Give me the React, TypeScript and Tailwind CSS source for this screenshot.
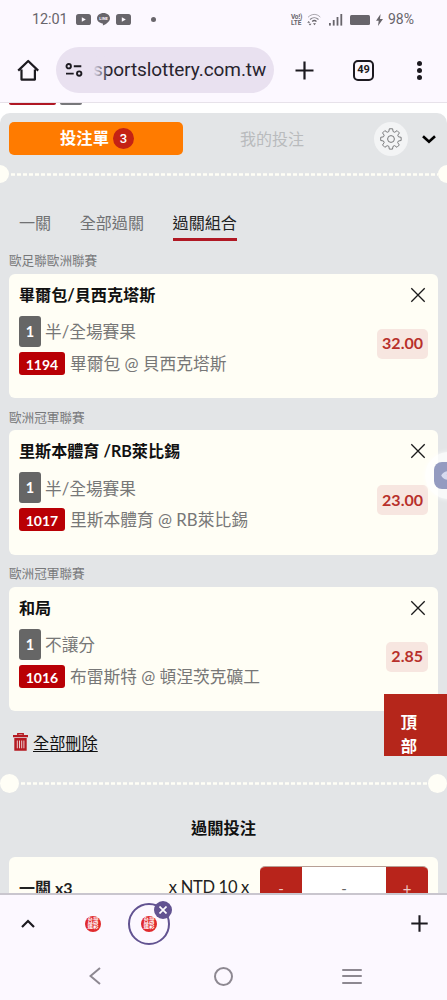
type Bet = {
  league: string
  title: string
  order: string
  play: string
  code: string
  match: string
  odds: string
}

const bets: Bet[] = [
  { league: '歐足聯歐洲聯賽', title: '畢爾包/貝西克塔斯', order: '1', play: '半/全場賽果', code: '1194', match: '畢爾包 @ 貝西克塔斯', odds: '32.00' },
  { league: '歐洲冠軍聯賽', title: '里斯本體育 /RB萊比錫', order: '1', play: '半/全場賽果', code: '1017', match: '里斯本體育 @ RB萊比錫', odds: '23.00' },
  { league: '歐洲冠軍聯賽', title: '和局', order: '1', play: '不讓分', code: '1016', match: '布雷斯特 @ 頓涅茨克礦工', odds: '2.85' },
]

const tabs = ['一關', '全部過關', '過關組合']

function VideoIcon() {
  return (
    <svg width="15" height="11" viewBox="0 0 15 11">
      <rect width="15" height="11" rx="2.6" fill="#68656b" />
      <path d="M5.8 3.2v4.6l4-2.3z" fill="#fcf8ff" />
    </svg>
  )
}

function StatusBar() {
  return (
    <div className="flex h-[38px] shrink-0 items-center pt-px pl-[32px] pr-[33px] text-[#68656b]">
      <span className="w-[44px] font-[Roboto,sans-serif] text-[14.5px] tracking-[-0.1px] whitespace-nowrap">12:01</span>
      <div className="flex items-center gap-[6px]">
        <VideoIcon />
        <svg width="13" height="13" viewBox="0 0 13 13">
          <path d="M6.5 0C2.9 0 0 2.3 0 5.2c0 2.7 2.3 4.7 5.6 5.2.5.1.3 1 .3 2.1C8.5 11.5 13 8.7 13 5.2 13 2.3 10.1 0 6.5 0z" fill="#68656b" />
          <text x="6.5" y="6.8" textAnchor="middle" fontSize="4" fontWeight="700" fill="#fcf8ff" fontFamily="Roboto, sans-serif">LINE</text>
        </svg>
        <VideoIcon />
      </div>
      <span className="ml-[20px] size-[5px] rounded-full bg-[#68656b]" />
      <div className="ml-auto flex items-center">
        <div className="mr-[4px] flex w-[12px] flex-col font-[Roboto,sans-serif] text-[6.5px] leading-[6px] font-bold">
          <span className="tracking-[-0.3px]">Vo⁞)</span>
          <span>LTE</span>
        </div>
        <svg width="14" height="13" viewBox="0 0 14 13" fill="none" stroke="#68656b">
          <path d="M1 4.3c3.7-3.8 8.8-3.8 12.3-.2" strokeWidth="1" opacity=".55" />
          <path d="M3 6.5c2.5-2.4 6-2.4 8.5 0" strokeWidth="1.1" opacity=".8" />
          <path d="M5.2 8.5c1.3-1.2 2.9-1.2 4.3 0" strokeWidth="1.3" />
          <path d="M6 10.3h3l-1.5 1.9z" fill="#68656b" stroke="none" />
          <path d="M.2 9.8 1.7 8l1.5 1.8zM1.5 10.7h3L3 12.5z" fill="#68656b" stroke="none" />
        </svg>
        <svg className="ml-[8px]" width="14" height="13" viewBox="0 0 14 13" fill="#68656b">
          <rect x="0" y="10" width="1.8" height="2.6" />
          <rect x="3.8" y="7" width="1.8" height="5.6" />
          <rect x="7.6" y="4" width="1.8" height="8.6" />
          <rect x="11.4" y="1" width="1.8" height="11.6" />
        </svg>
        <span className="ml-[7px] h-[10px] w-[20px] rounded-[1.5px] bg-[#68656b]" />
        <svg className="ml-[6px]" width="7" height="12" viewBox="0 0 7 12">
          <path d="M4.6 0 0 6.7h2.7L2 12l5-7H4z" fill="#68656b" />
        </svg>
        <span className="ml-[5px] font-[Roboto,sans-serif] text-[14px]">98%</span>
      </div>
    </div>
  )
}

function AddressBar() {
  return (
    <div className="flex h-[64px] shrink-0 items-center px-[17px]">
      <svg width="22" height="22" viewBox="0 0 22 22" fill="none" stroke="#1c1a20" strokeWidth="2.2" strokeLinejoin="round">
        <path d="M1.2 11.6 11.2 2l10 9.6M4.5 10.5v10.1h13.4V10.5" />
      </svg>
      <div className="ml-[17px] flex h-[46px] w-[218px] items-center rounded-full bg-[#e9e1f0] pl-[9px]">
        <svg width="18" height="14" viewBox="0 0 18 14" fill="none" stroke="#1c1a20" strokeWidth="1.9">
          <circle cx="3.7" cy="3.2" r="2.2" />
          <path d="M8.8 3.2h7.5M1 10.6h7.7" />
          <circle cx="14.2" cy="10.6" r="2.2" />
        </svg>
        <div className="relative ml-[10px] w-[176px] overflow-hidden font-[Roboto,sans-serif] text-[19px] leading-[28px] tracking-[-0.08px] whitespace-nowrap text-[#28242e]">
          sportslottery.com.tw
          <span className="absolute inset-y-0 left-0 w-[13px] bg-linear-to-r from-[#e9e1f0] to-[#e9e1f0]/20" />
        </div>
      </div>
      <svg className="ml-[21px]" width="19" height="19" viewBox="0 0 19 19" stroke="#1c1a20" strokeWidth="2.2">
        <path d="M9.5 .5v18M.5 9.5h18" />
      </svg>
      <span className="ml-[39px] flex size-[21px] items-center justify-center rounded-[5px] border-2 border-[#1c1a20] font-[Roboto,sans-serif] text-[11px] font-bold text-[#1c1a20]">
        49
      </span>
      <div className="ml-[43px] flex flex-col gap-[2px]">
        <span className="size-[5px] rounded-full bg-[#1c1a20]" />
        <span className="size-[5px] rounded-full bg-[#1c1a20]" />
        <span className="size-[5px] rounded-full bg-[#1c1a20]" />
      </div>
    </div>
  )
}

function Dashes() {
  return (
    <svg className="min-w-0 flex-1" height="3">
      <line x1="2" y1="1.5" x2="100%" y2="1.5" stroke="#fffef6" strokeWidth="2.3" strokeDasharray="4 2" />
    </svg>
  )
}

function BetCard({ bet }: { bet: Bet }) {
  return (
    <div>
      <p className="h-[18px] text-[12.6px] leading-[19px] text-[#77787a]">{bet.league}</p>
      <div className="mt-[4.5px] flex h-[124.5px] justify-between rounded-[6px] bg-[#fffef5] pt-[10px] pr-[10px] pl-[10px]">
        <div>
          <h3 className="h-[24px] text-[16.1px] leading-[22px] font-bold text-[#111] whitespace-pre">{bet.title}</h3>
          <div className="mt-[8px] flex h-[31px] items-center gap-[4px]">
            <span className="flex h-[31px] w-[22px] items-center justify-center rounded-[3px] bg-[#666] pt-px text-[14.5px] font-bold text-white">{bet.order}</span>
            <span className="pt-[2px] text-[16.7px] leading-[24px] text-[#777]">{bet.play}</span>
          </div>
          <div className="mt-[5px] flex h-[23px] items-center gap-[5px]">
            <span className="flex h-[23px] w-[46px] items-center justify-center rounded-[3px] bg-[#b90005] pt-[2px] text-[14px] font-bold text-white">{bet.code}</span>
            <span className="text-[16.75px] leading-[23px] text-[#777]">{bet.match}</span>
          </div>
        </div>
        <div className="flex flex-col items-end">
          <svg className="mt-[3px] mr-[2px]" width="16" height="16" viewBox="0 0 16 16" stroke="#1a1a1a" strokeWidth="1.3">
            <path d="M1.3 1.3l13.4 13.4M14.7 1.3 1.3 14.7" />
          </svg>
          <span className="mt-[26px] flex h-[30px] items-center rounded-[5px] bg-[#f7e6e0] px-[5px] pb-px text-[16px] font-bold text-[#b8302b]">{bet.odds}</span>
        </div>
      </div>
    </div>
  )
}

// 分頁縮圖用的網站圖示
function SiteIcon() {
  return (
    <span className="block size-[16px] shrink-0 rounded-full bg-[#e02a2d] px-[2.5px] pt-[2.5px] font-['Noto_Sans_CJK_TC',sans-serif] text-[5.5px] leading-[5.5px] font-bold break-all text-white">
      台灣運彩
    </span>
  )
}

function BetSlip() {
  return (
    <div className="relative h-[791px] shrink-0 overflow-hidden border-t border-[#e7e2ea] bg-white font-[Lato,'Noto_Sans_CJK_TC',sans-serif]">
      <div className="flex h-[10px] gap-[4px] pl-[9px]">
        <span className="h-[2px] w-[47px] rounded-b-sm bg-[#b01824]" />
        <span className="h-[2px] w-[22px] rounded-b-sm bg-[#77777a]" />
      </div>
      <div className="h-[790px] rounded-t-[10px] bg-[#e3e5e7] pt-[9px]">
        <div className="flex h-[33px] items-center pl-[9px]">
          <button className="flex h-[33px] w-[174px] items-center justify-center gap-[4px] rounded-[5px] bg-[#ff7b00] pl-[2px] text-[16.3px] font-bold text-white">
            投注單
            <span className="flex size-[21px] items-center justify-center rounded-full bg-[#c42214] font-[Roboto,sans-serif] text-[13px] font-medium">3</span>
          </button>
          <span className="ml-[57px] text-[16px] text-[#b9bbbd]">我的投注</span>
          <span className="ml-auto flex size-[34px] items-center justify-center rounded-full bg-[#f3f4f5]">
            <svg width="22" height="22" viewBox="0 0 22 22" fill="none" stroke="#77787a" strokeWidth="1" strokeLinejoin="round">
              <path d="M9.3 1h3.4l.5 2.9 1.7.7 2.4-1.7 2.4 2.4L18 7.6l.7 1.7 2.8.5v3.3l-2.9.5-.7 1.7 1.7 2.4-2.4 2.4-2.4-1.7-1.7.7-.5 2.9H9.3l-.5-2.9-1.7-.7-2.4 1.7-2.4-2.4L4 15.3l-.7-1.7-2.9-.5V9.8l2.9-.5L4 7.6 2.3 5.3l2.4-2.4 2.4 1.7 1.7-.7z" transform="translate(.3 -.2) scale(.97)" />
              <circle cx="11" cy="11" r="3.4" />
            </svg>
          </span>
          <svg className="mr-[11px] ml-[14px] mt-[2px]" width="14" height="9" viewBox="0 0 14 9" fill="none" stroke="#000" strokeWidth="2.6">
            <path d="M1 1.2l6 5.6 6-5.6" />
          </svg>
        </div>

        <div className="mt-[10px] flex h-[18px] items-center">
          <span className="h-[18px] w-[9px] rounded-r-full bg-[#fffef6]" />
          <Dashes />
          <span className="h-[18px] w-[9px] rounded-l-full bg-[#fffef6]" />
        </div>

        {/* 過關方式 */}
        <div className="mt-[28px] flex gap-[28.5px] pl-[19px]">
          {tabs.map((tab) => (
            <span
              key={tab}
              className={`h-[30px] border-b-[3px] text-[16.1px] leading-[24px] ${
                tab === '過關組合' ? 'border-[#b01824] text-[#222]' : 'border-transparent text-[#707173]'
              }`}
            >
              {tab}
            </span>
          ))}
        </div>

        <div className="mt-[10px] flex flex-col gap-[9.5px] px-[9px]">
          {bets.map((bet) => (
            <BetCard key={bet.code} bet={bet} />
          ))}
        </div>

        <div className="mt-[20px] flex h-[24px] items-center gap-[5px] pl-[13px]">
          <svg className="-mt-[2px]" width="15" height="18" viewBox="0 0 15 18">
            <path d="M0 2h15v2.2H0zM1.3 5h12.4v12.8H1.3z" fill="#b51a22" />
            <path d="M4.8 2V.8h5.4V2" fill="none" stroke="#b51a22" strokeWidth="1.4" />
            <path d="M4.3 7.5v7.8M6.5 7.5v7.8M8.7 7.5v7.8M10.9 7.5v7.8" stroke="#eee2e3" strokeWidth=".9" />
          </svg>
          <span className="text-[16.2px] leading-[24px] text-[#111] underline decoration-1 underline-offset-[2px]">全部刪除</span>
        </div>

        <div className="mt-[18.5px] flex h-[19px] items-center">
          <span className="size-[19px] rounded-full bg-[#fffef6]" />
          <Dashes />
          <span className="size-[19px] rounded-full bg-[#fffef6]" />
        </div>

        <h2 className="mt-[23.5px] text-center text-[16.3px] leading-[24px] font-bold text-[#111]">過關投注</h2>

        <div className="mx-[9px] mt-[17px] flex h-[60px] rounded-[6px] bg-[#fffef5] pr-[10px] pl-[10px] text-[16px]">
          <span className="mt-[19px] leading-[24px] font-bold text-[#222]">一關 x3</span>
          <span className="mt-[18px] ml-auto text-[16.5px] leading-[24px] tracking-[-0.3px] text-[#222]">x NTD 10 x</span>
          <div className="mt-[9px] ml-[11px] flex h-[44px] w-[168px] overflow-hidden rounded-[5px] border-t border-[#b79f95] bg-white text-[15px] leading-[42px]">
            <span className="w-[42px] bg-[#b8241b] text-center text-[#eecac6]">-</span>
            <span className="flex-1 text-center text-[#666]">-</span>
            <span className="w-[42px] bg-[#b8241b] text-center text-[#eecac6]">+</span>
          </div>
        </div>
      </div>

      {/* 回頂部 */}
      <button className="absolute top-[590.5px] right-0 h-[62px] w-[63px] bg-[#b5261b] pt-[16px] pr-[13px] text-center text-[16.3px] leading-[24px] font-bold text-white">
        頂
        <br />部
      </button>

      {/* 懸浮小工具 */}
      <div className="absolute top-[349px] -right-[25px] flex size-[47px] items-center rounded-full bg-white/75 pl-[8.5px] shadow-[0_0_5px_rgba(255,255,255,0.8)]">
        <span className="flex size-[27px] items-center rounded-[8px] bg-[#949bc0] pl-[6px]">
          <svg width="15" height="13" viewBox="0 0 15 13" fill="#d6daef">
            <path d="M1.2 6.5C2.5 3.5 5.5 2.2 9 2v3.2H6.5l3 2.6V11C5 10.8 2.5 9.5 1.2 6.5z" />
          </svg>
        </span>
      </div>
    </div>
  )
}

function TabStrip() {
  return (
    <div className="relative flex h-[59px] shrink-0 items-center border-t-2 border-[#c9c6ce] bg-[#fcf8ff] px-[19px]">
      <svg className="ml-[2px]" width="14" height="9" viewBox="0 0 14 9" fill="none" stroke="#1c1a20" strokeWidth="2.2">
        <path d="M1 8l6-6 6 6" />
      </svg>
      <div className="ml-[50px] flex size-[16px] items-center justify-center">
        <SiteIcon />
      </div>
      <div className="relative ml-[27px] flex size-[42px] items-center justify-center rounded-full border-2 border-[#625391]">
        <SiteIcon />
        <span className="absolute -top-[4px] -right-[4px] flex size-[18px] items-center justify-center rounded-full bg-[#625391]">
          <svg width="8" height="8" viewBox="0 0 8 8" stroke="#fff" strokeWidth="1.7">
            <path d="M.5.5l7 7M7.5.5l-7 7" />
          </svg>
        </span>
      </div>
      <svg className="ml-auto" width="17" height="17" viewBox="0 0 17 17" stroke="#1c1a20" strokeWidth="2.1">
        <path d="M8.5 .3v16.4M.3 8.5h16.4" />
      </svg>
    </div>
  )
}

function SystemNav() {
  return (
    <div className="flex h-[48px] shrink-0 items-center pl-[89px]">
      <svg width="12" height="18" viewBox="0 0 12 18" fill="none" stroke="#8d8891" strokeWidth="2">
        <path d="M11 1 1.5 9l9.5 8" />
      </svg>
      <span className="ml-[113px] size-[19px] rounded-full border-2 border-[#8d8891]" />
      <div className="ml-[109px] flex w-[20px] flex-col gap-[4.5px]">
        <span className="h-[2px] rounded-full bg-[#8d8891]" />
        <span className="h-[2px] rounded-full bg-[#8d8891]" />
        <span className="h-[2px] rounded-full bg-[#8d8891]" />
      </div>
    </div>
  )
}

export default function App() {
  return (
    <div className="flex h-[1000px] w-[447px] flex-col overflow-hidden bg-[#fcf8ff]">
      <StatusBar />
      <AddressBar />
      <BetSlip />
      <TabStrip />
      <SystemNav />
    </div>
  )
}
